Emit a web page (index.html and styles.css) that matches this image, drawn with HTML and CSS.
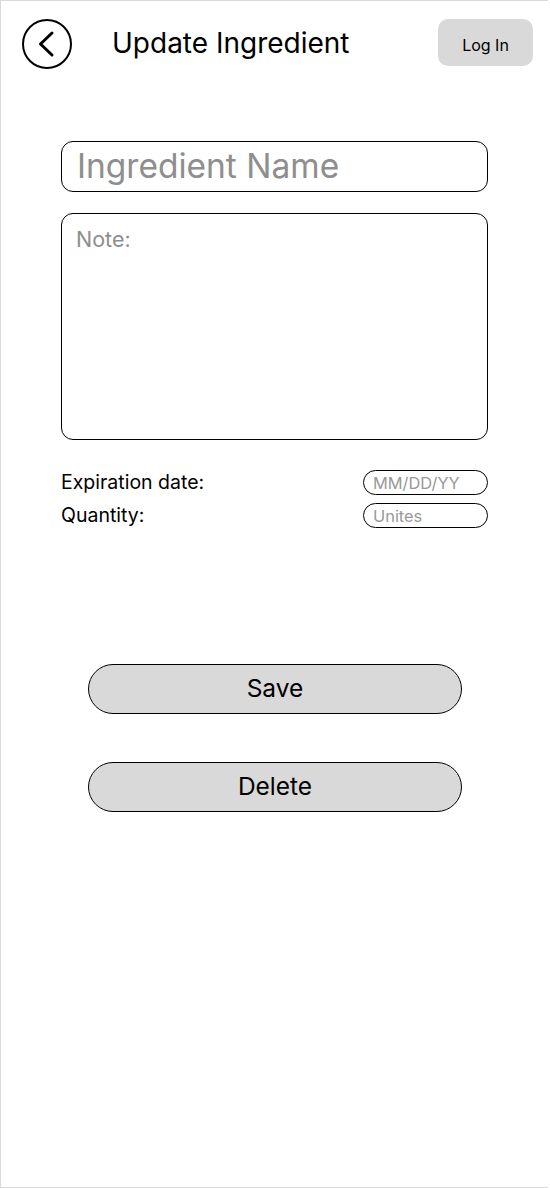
FILE: index.html
```html
<!DOCTYPE html>
<html lang="en">
<head>
<meta charset="utf-8">
<title>Update Ingredient</title>
<link rel="stylesheet" href="styles.css">
</head>
<body>
<div class="frame">
  <header class="header">
    <button class="back" aria-label="Back">
      <svg width="52" height="52" viewBox="0 0 52 52" aria-hidden="true">
        <circle cx="26" cy="26" r="24" fill="none" stroke="#000" stroke-width="2"/>
        <path d="M31 15 L19.5 26 L31 37" fill="none" stroke="#000" stroke-width="3" stroke-linecap="round" stroke-linejoin="round"/>
      </svg>
    </button>
    <h1 class="title">Update Ingredient</h1>
    <button class="login">Log In</button>
  </header>

  <main class="form">
    <div class="name-field">Ingredient Name</div>
    <div class="note-field">Note:</div>

    <div class="rows">
      <div class="row">
        <span class="label">Expiration date:</span>
        <span class="small-field">MM/DD/YY</span>
      </div>
      <div class="row">
        <span class="label">Quantity:</span>
        <span class="small-field">Unites</span>
      </div>
    </div>

    <div class="actions">
      <button class="action">Save</button>
      <button class="action">Delete</button>
    </div>
  </main>
</div>
</body>
</html>
```

FILE: styles.css
```css
* { box-sizing: border-box; }

html, body {
  margin: 0;
  padding: 0;
  background: #fff;
}

body {
  font-family: Inter, "Noto Sans", "Liberation Sans", sans-serif;
  color: #000;
}

.frame {
  width: 548px;
  height: 1188px;
  border-left: 1px solid #d9d9d9;
  border-top: 1px solid #d9d9d9;
  border-bottom: 1px solid #d9d9d9;
  background: #fff;
}

.header {
  display: flex;
  align-items: center;
  height: 52px;
  margin-top: 17px;
  padding: 0 15px 0 20px;
}

.back {
  width: 52px;
  height: 52px;
  padding: 0;
  border: 0;
  background: none;
  display: block;
}

.back svg { display: block; }

.title {
  margin: -2px 0 0 39px;
  font-size: 28px;
  font-weight: 400;
  line-height: 1;
  letter-spacing: 0;
}

.login {
  margin-left: auto;
  width: 95px;
  height: 47px;
  margin-top: -3px;
  border: 0;
  border-radius: 10px;
  background: #d9d9d9;
  font-family: inherit;
  font-size: 16px;
  color: #000;
  padding: 4px 0 0;
}

.form {
  padding: 0 60px;
  margin-top: 71px;
}

.name-field {
  height: 51px;
  border: 1.5px solid #000;
  border-radius: 12px;
  padding: 0 0 2px 15px;
  display: flex;
  align-items: center;
  font-size: 33.5px;
  color: #8e8e8e;
}

.note-field {
  margin-top: 21px;
  height: 227px;
  border: 1.5px solid #000;
  border-radius: 12px;
  padding: 12px 14px;
  font-size: 21.5px;
  color: #8e8e8e;
}

.rows {
  margin-top: 30px;
  display: flex;
  flex-direction: column;
  gap: 8px;
}

.row {
  display: flex;
  align-items: center;
  justify-content: space-between;
}

.label {
  font-size: 19.5px;
  line-height: 1;
}

.small-field {
  width: 125px;
  height: 25px;
  border: 1.5px solid #000;
  border-radius: 13px;
  padding: 0 0 0 9px;
  display: flex;
  align-items: center;
  font-size: 16.4px;
  color: #999;
}

.actions {
  margin-top: 136px;
  padding-left: 27px;
  display: flex;
  flex-direction: column;
  gap: 48px;
}

.action {
  width: 374px;
  height: 50px;
  border: 1px solid #000;
  border-radius: 25px;
  background: #d9d9d9;
  font-family: inherit;
  font-size: 24.5px;
  color: #000;
  padding: 0 0 2px;
}
```
